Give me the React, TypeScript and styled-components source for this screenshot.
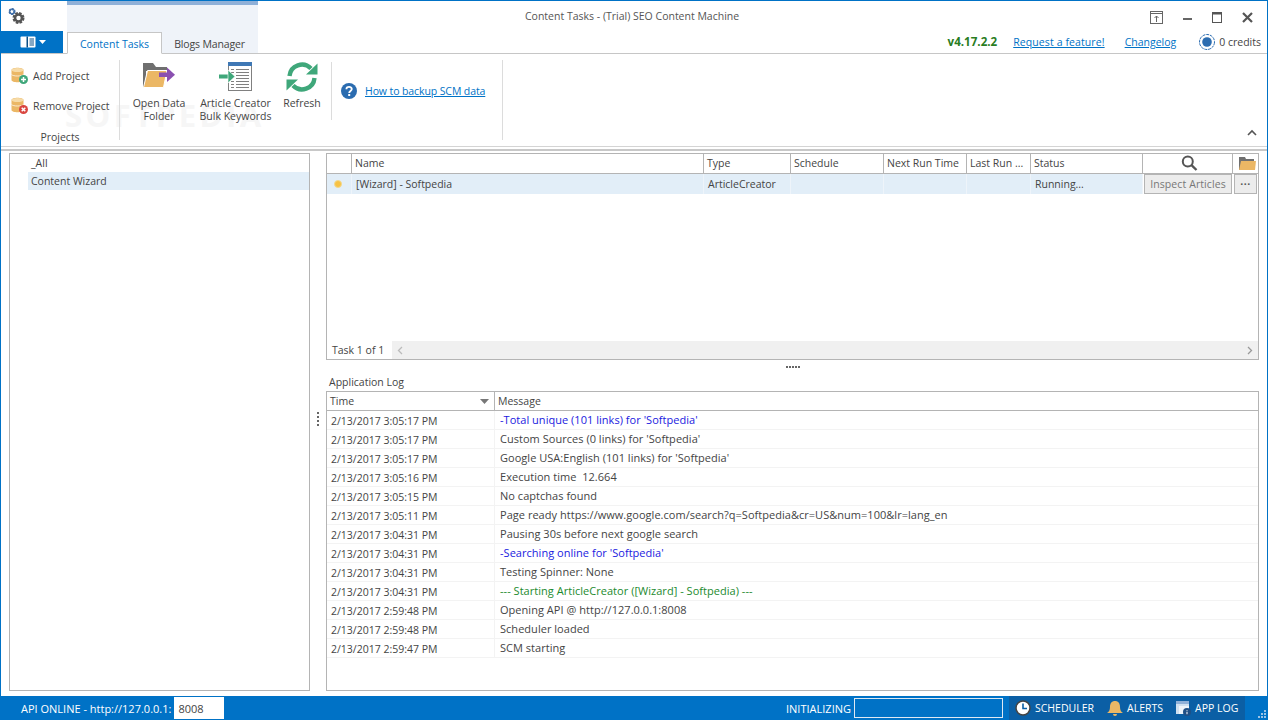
import * as React from 'react';
import styled, { createGlobalStyle } from 'styled-components';

const GlobalStyle = createGlobalStyle`
  html, body { margin: 0; padding: 0; height: 100%; background: #fff; overflow: hidden; }
  body { font-family: "Open Sans", "Noto Sans", "Liberation Sans", sans-serif; font-size: 10.5px; color: #444; }
  * { box-sizing: border-box; }
`;

const Window = styled.div`
  width: 1268px;
  height: 720px;
  display: flex;
  flex-direction: column;
  border: 1px solid #0072c6;
  border-bottom: none;
  background: #fff;
`;

const TopBar = styled.div`
  height: 53px;
  display: flex;
  border-bottom: 1px solid #c6c6c6;
`;

const LeftCol = styled.div`
  width: 66px;
  display: flex;
  flex-direction: column;
`;

const Quick = styled.div`
  height: 31px;
  padding: 6px 0 0 6px;
`;

const FileButton = styled.div`
  width: 62px;
  height: 22px;
  background: #0072c6;
  display: flex;
  align-items: center;
  justify-content: center;
  gap: 3px;
  padding-left: 2px;
`;

const Band = styled.div`
  width: 191px;
  background: #eff3f9;
  border-top: 4px solid #8fb0d8;
  display: flex;
  align-items: flex-end;
`;

const Tab = styled.div<{ $active?: boolean }>`
  height: 22px;
  margin-bottom: -1px;
  padding-top: 1px;
  display: flex;
  align-items: center;
  justify-content: center;
  font-size: 10.5px;
  width: ${p => (p.$active ? '95px' : '95px')};
  color: ${p => (p.$active ? '#0072c6' : '#444')};
  background: ${p => (p.$active ? '#fff' : 'transparent')};
  border: ${p => (p.$active ? '1px solid #c6c6c6' : 'none')};
  border-bottom: ${p => (p.$active ? '1px solid #fff' : 'none')};
  letter-spacing: ${p => (p.$active ? '0' : '-0.15px')};
  position: relative;
`;

const RightCol = styled.div`
  flex: 1;
  display: flex;
  flex-direction: column;
`;

const TitleRow = styled.div`
  height: 31px;
  display: flex;
  align-items: flex-start;
`;

const Title = styled.div`
  margin-left: 267px;
  padding-top: 8px;
  font-size: 10.5px;
  color: #555;
  flex: 1;
`;

const Controls = styled.div`
  display: flex;
  align-items: flex-start;
  gap: 20px;
  padding: 10px 14px 0 0;
`;

const InfoRow = styled.div`
  flex: 1;
  display: flex;
  align-items: center;
  justify-content: flex-end;
  padding: 0 6px 2px 0;
`;

const Version = styled.span`
  font-weight: 700;
  color: #2a7d1f;
  font-size: 11.6px;
  margin-right: 16px;
`;

const Link = styled.a`
  color: #0072c6;
  text-decoration: underline;
  font-size: 10.5px;
`;

const FeatureLink = styled(Link)`
  letter-spacing: 0.1px;
  margin-right: 20px;
`;

const HelpLink = styled(Link)`
  letter-spacing: -0.1px;
`;

const Credits = styled.span`
  display: flex;
  align-items: center;
  gap: 4px;
  margin-left: 23px;
  color: #444;
`;

const Ribbon = styled.div`
  height: 93px;
  display: flex;
  position: relative;
  border-bottom: 1px solid #d4d4d4;
`;

const Watermark = styled.div`
  position: absolute;
  left: 64px;
  top: 40px;
  font-size: 31px;
  font-weight: 700;
  letter-spacing: 3.5px;
  color: #f6f6f6;
  white-space: nowrap;
`;

const ProjectsGroup = styled.div`
  width: 119px;
  height: 80px;
  margin-top: 6px;
  padding-top: 1px;
  border-right: 1px solid #dcdcdc;
  display: flex;
  flex-direction: column;
  position: relative;
`;

const SmallButton = styled.div`
  flex: none;
  height: 30px;
  display: flex;
  align-items: center;
  gap: 4px;
  padding-left: 10px;
  font-size: 10.5px;
`;

const GroupLabel = styled.div`
  flex: none;
  margin-top: 8px;
  text-align: center;
  font-size: 10.5px;
  line-height: 16px;
`;

const LargeGroup = styled.div`
  width: 212px;
  display: flex;
  position: relative;
`;

const GroupEdge = styled.div`
  width: 1px;
  height: 58px;
  margin-top: 8px;
  background: #dcdcdc;
  flex: none;
`;

const LargeButton = styled.div<{ $w: number }>`
  width: ${p => p.$w}px;
  display: flex;
  flex-direction: column;
  align-items: center;
  text-align: center;
  line-height: 13px;
  font-size: 10.5px;
  padding-top: 8px;
`;

const IconSlot = styled.div`
  height: 35px;
  display: flex;
  align-items: flex-start;
  justify-content: center;
`;

const HelpGroup = styled.div`
  width: 171px;
  height: 80px;
  margin-top: 6px;
  border-right: 1px solid #dcdcdc;
  display: flex;
  align-items: center;
  gap: 8px;
  padding: 0 0 18px 9px;
`;

const Collapse = styled.div`
  position: absolute;
  right: 10px;
  bottom: 7px;
`;

const Divider = styled.div`
  height: 2px;
  background: #c8c8c8;
  margin-top: 2px;
`;

const Main = styled.div`
  flex: 1;
  display: flex;
  padding: 2px 8px 5px 8px;
`;

const TreePanel = styled.div`
  width: 301px;
  border: 1px solid #b4b4b4;
  padding: 0 0 0 18px;
`;

const TreeRow = styled.div<{ $selected?: boolean }>`
  height: 18px;
  line-height: 18px;
  padding-left: 3px;
  background: ${p => (p.$selected ? '#e2eef8' : 'transparent')};
`;

const Splitter = styled.div`
  width: 16px;
  display: flex;
  align-items: center;
  justify-content: center;
`;

const SplitDots = styled.div`
  display: flex;
  flex-direction: column;
  gap: 2px;
  transform: translateY(-3px);
  & > i { width: 2px; height: 2px; background: #666; display: block; }
`;

const RightPanel = styled.div`
  flex: 1;
  display: flex;
  flex-direction: column;
`;

const TaskGrid = styled.div`
  height: 207px;
  border: 1px solid #b4b4b4;
  display: flex;
  flex-direction: column;
`;

const taskCols = '25px 352px 87px 93px 83px 64px 112px 90px 1fr';

const TaskHeader = styled.div`
  height: 20px;
  display: grid;
  grid-template-columns: ${taskCols};
  border-bottom: 1px solid #b4b4b4;
`;

const HeadCell = styled.div<{ $center?: boolean }>`
  border-right: 1px solid #b4b4b4;
  padding: 0 0 1px 3px;
  display: flex;
  align-items: center;
  justify-content: ${p => (p.$center ? 'center' : 'flex-start')};
  white-space: nowrap;
  overflow: hidden;
  &:last-child { border-right: none; }
`;

const TaskRow = styled.div`
  height: 20px;
  display: grid;
  grid-template-columns: ${taskCols};
  background: #e2eef8;
`;

const TaskCell = styled.div`
  padding-left: 4px;
  display: flex;
  align-items: center;
  white-space: nowrap;
  border-right: 1px solid #eef4fa;
`;

const Dot = styled.div`
  width: 8px;
  height: 8px;
  border-radius: 50%;
  background: #f7c244;
  border: 1px solid #f3d98e;
  margin-left: 3px;
`;

const ActionCell = styled.div`
  background: #fff;
  padding: 0 1px;
  display: flex;
`;

const GreyButton = styled.div`
  flex: 1;
  height: 20px;
  background: #ececec;
  border: 1px solid #b4b4b4;
  color: #777;
  display: flex;
  align-items: center;
  justify-content: center;
  letter-spacing: 0.1px;
`;

const MoreButton = styled(GreyButton)`
  color: #555;
  font-weight: 700;
  letter-spacing: 0.5px;
`;

const TaskBody = styled.div`
  flex: 1;
`;

const TaskFooter = styled.div`
  height: 18px;
  display: flex;
  align-items: center;
`;

const FooterLabel = styled.div`
  width: 65px;
  padding-left: 5px;
  white-space: nowrap;
`;

const ScrollTrack = styled.div`
  flex: 1;
  height: 18px;
  background: #f0f0f0;
  display: flex;
  align-items: center;
  justify-content: space-between;
  padding: 0 5px;
`;

const HSplit = styled.div`
  height: 14px;
  display: flex;
  align-items: center;
  justify-content: center;
  gap: 1px;
  & > i { width: 2px; height: 2px; background: #666; display: block; }
`;

const LogLabel = styled.div`
  height: 17px;
  line-height: 17px;
  padding-left: 3px;
`;

const LogGrid = styled.div`
  flex: 1;
  border: 1px solid #b4b4b4;
  display: flex;
  flex-direction: column;
`;

const logCols = '168px 1fr';

const LogHeader = styled.div`
  height: 19px;
  display: grid;
  grid-template-columns: ${logCols};
  border-bottom: 1px solid #b4b4b4;
`;

const LogHead = styled.div`
  display: flex;
  align-items: center;
  justify-content: space-between;
  padding: 0 5px 0 3px;
  &:first-child { border-right: 1px solid #b4b4b4; }
`;

const LogRow = styled.div`
  height: 19px;
  display: grid;
  grid-template-columns: ${logCols};
  border-bottom: 1px solid #f3f3f3;
`;

const LogTime = styled.div`
  padding: 1px 0 0 4px;
  border-right: 1px solid #f3f3f3;
  display: flex;
  align-items: center;
  white-space: nowrap;
`;

const LogMessage = styled.div<{ $color?: string }>`
  padding: 0 0 1px 5px;
  display: flex;
  align-items: center;
  white-space: pre;
  font-size: 11px;
  letter-spacing: 0.03px;
  color: ${p => p.$color || '#444'};
`;

const StatusBar = styled.div`
  height: 24px;
  background: #0072c6;
  color: #fff;
  display: flex;
  align-items: center;
  margin: 0 -1px;
  padding-left: 21px;
  font-size: 11px;
`;

const PortInput = styled.div`
  width: 50px;
  height: 22px;
  background: #fff;
  color: #444;
  margin-left: 3px;
  padding-left: 4px;
  display: flex;
  align-items: center;
  font-size: 11px;
`;

const StatusText = styled.span`
  margin-left: auto;
  margin-right: 3px;
`;

const ProgressBox = styled.div`
  width: 149px;
  height: 20px;
  border: 1px solid #dfe9f3;
  margin-right: 6px;
`;

const StatusGroup = styled.div`
  height: 24px;
  width: 236px;
  background: #0b5fa5;
  display: flex;
  align-items: center;
  padding-left: 6px;
  font-size: 10.5px;
`;

const StatusItem = styled.div<{ $gap: number }>`
  display: flex;
  align-items: center;
  gap: 4px;
  margin-right: ${p => p.$gap}px;
`;

const Grip = styled.div`
  width: 23px;
  height: 24px;
  display: flex;
  align-items: flex-end;
  justify-content: flex-end;
  padding: 0 2px 2px 0;
`;

const Gears = () => (
  <svg width="20" height="20" viewBox="0 0 20 20">
    <circle cx="5" cy="4.5" r="2.4" fill="none" stroke="#3f6ea8" strokeWidth="2.2" strokeDasharray="1.6 0.9" />
    <circle cx="5" cy="4.5" r="2.4" fill="none" stroke="#3f6ea8" strokeWidth="1.2" />
    <circle cx="11.5" cy="11" r="4.2" fill="none" stroke="#555" strokeWidth="3.6" strokeDasharray="2.2 1.1" />
    <circle cx="11.5" cy="11" r="3.5" fill="none" stroke="#555" strokeWidth="2.4" />
  </svg>
);

const FileIcon = () => (
  <>
    <svg width="16" height="12" viewBox="0 0 16 12">
      <rect x="0.5" y="0.5" width="15" height="11" rx="1" fill="#fff" />
      <rect x="6.5" y="0.5" width="1.5" height="11" fill="#0b4f86" />
      <path d="M9.5 3h4.5M9.5 5h4.5M9.5 7h4.5M9.5 9h4.5" stroke="#0b4f86" strokeWidth="1" />
    </svg>
    <svg width="7" height="4" viewBox="0 0 7 4"><path d="M0 0h7L3.5 4z" fill="#fff" /></svg>
  </>
);

const Database = ({ kind }: { kind: 'add' | 'remove' }) => (
  <svg width="18" height="18" viewBox="0 0 18 18">
    <path d="M0.5 3c0-3 12-3 12 0v10c0 3-12 3-12 0z" fill="#ebb765" />
    <ellipse cx="6.5" cy="3" rx="6" ry="2" fill="#f6dba8" />
    <path d="M0.5 7.5c1.5 2 10.5 2 12 0" fill="none" stroke="#fff" strokeWidth="0.7" />
    <circle cx="12.5" cy="12.5" r="4.5" fill={kind === 'add' ? '#3fa77a' : '#d9453f'} />
    {kind === 'add' ? (
      <path d="M10 12.5h5M12.5 10v5" stroke="#fff" strokeWidth="1.5" />
    ) : (
      <path d="M10.7 10.7l3.6 3.6M14.3 10.7l-3.6 3.6" stroke="#fff" strokeWidth="1.5" />
    )}
  </svg>
);

const FolderArrow = () => (
  <svg width="33" height="26" viewBox="0 0 33 26">
    <path d="M0 1V25H3V9H24V5H13L10 1z" fill="#6f6f6f" />
    <path d="M0.5 25.5L4.5 8.5H24L20.5 25.5z" fill="#ebb765" stroke="#fff" />
    <rect x="16" y="10.5" width="9" height="4.5" fill="#8a4fb0" />
    <path d="M24 5.5L32 12.8L24 20z" fill="#8a4fb0" />
  </svg>
);

const ArticleIcon = () => (
  <svg width="33" height="29" viewBox="0 0 33 29">
    <rect x="9.5" y="0.5" width="23" height="28" fill="#fff" stroke="#808080" />
    <rect x="9" y="0" width="24" height="4" fill="#3f78b5" />
    <path d="M17 7.5h13M17 10.5h13M17 13.5h13M17 16.5h13M17 19.5h13M17 22.5h13M17 25.5h13" stroke="#808080" />
    <path d="M12 7.5h3M12 10.5h3M12 19.5h3M12 22.5h3M12 25.5h3" stroke="#808080" />
    <rect x="0" y="12.5" width="10" height="4" fill="#3fa77a" />
    <path d="M9 8L16 14.5L9 21z" fill="#3fa77a" stroke="#fff" strokeWidth="0.6" />
  </svg>
);

const RefreshIcon = () => (
  <svg width="32" height="30" viewBox="0 0 32 30">
    <path d="M3.5 14A12.5 12.5 0 0 1 25 6.5" fill="none" stroke="#3fa77a" strokeWidth="4.4" />
    <path d="M20 12.5H31.5V1.5z" fill="#3fa77a" />
    <path d="M28.5 16A12.5 12.5 0 0 1 7 23.5" fill="none" stroke="#3fa77a" strokeWidth="4.4" />
    <path d="M12 17.5H0.5V28.5z" fill="#3fa77a" />
  </svg>
);

const HelpIcon = () => (
  <svg width="16" height="16" viewBox="0 0 16 16">
    <circle cx="8" cy="8" r="8" fill="#2b6cb0" />
    <path d="M5.4 6.2C5.4 3.2 10.8 3.2 10.8 6.1C10.8 8 8.2 8 8.2 10" fill="none" stroke="#fff" strokeWidth="1.8" />
    <rect x="7.2" y="11" width="2" height="2" fill="#fff" />
  </svg>
);

const WinControls = () => (
  <Controls>
    <svg width="13" height="13" viewBox="0 0 13 13">
      <rect x="0.5" y="0.5" width="12" height="12" fill="none" stroke="#666" />
      <path d="M0 2.5h13" stroke="#666" />
      <path d="M6.5 11V5M4.5 7l2-2 2 2" fill="none" stroke="#666" />
    </svg>
    <svg width="9" height="13" viewBox="0 0 9 13"><rect x="0" y="7" width="9" height="2" fill="#666" /></svg>
    <svg width="10" height="11" viewBox="0 0 10 11" style={{ marginTop: 1 }}>
      <rect x="0.5" y="0.5" width="9" height="10" fill="none" stroke="#555" />
      <rect x="0" y="0" width="10" height="2.5" fill="#555" />
    </svg>
    <svg width="11" height="11" viewBox="0 0 11 11" style={{ marginTop: 1 }}>
      <path d="M1 1l9 9M10 1l-9 9" stroke="#555" strokeWidth="2.2" />
    </svg>
  </Controls>
);

const CreditIcon = () => (
  <svg width="16" height="16" viewBox="0 0 16 16">
    <circle cx="8" cy="8" r="7.5" fill="none" stroke="#2b6cb0" strokeDasharray="3 0.8" />
    <circle cx="8" cy="8" r="4.8" fill="#2b6cb0" />
  </svg>
);

const SearchIcon = () => (
  <svg width="17" height="16" viewBox="0 0 17 16">
    <circle cx="6.8" cy="6.5" r="5" fill="none" stroke="#555" strokeWidth="2" />
    <path d="M10.5 10.2l5 4.8" stroke="#555" strokeWidth="2.4" />
  </svg>
);

const FolderIcon = () => (
  <svg width="17" height="14" viewBox="0 0 17 14">
    <path d="M0 1V14H2V5H15V3H7L6 1z" fill="#6f6f6f" />
    <path d="M0 14L2 5H17L16 14z" fill="#ebb765" />
  </svg>
);

const ClockIcon = () => (
  <svg width="16" height="16" viewBox="0 0 16 16">
    <circle cx="8" cy="8" r="7" fill="#fff" stroke="#444" strokeWidth="1.5" />
    <path d="M8 3.5V8.5H12" fill="none" stroke="#0b5fa5" strokeWidth="1.6" />
  </svg>
);

const BellIcon = () => (
  <svg width="16" height="16" viewBox="0 0 16 16">
    <path d="M0 13C2 12 3 10 3 7C3 3 5 1 8 1C11 1 13 3 13 7C13 10 14 12 16 13z" fill="#ebb765" />
    <path d="M6 14h4a2 2 0 0 1-4 0z" fill="#ebb765" />
  </svg>
);

const AppLogIcon = () => (
  <svg width="15" height="15" viewBox="0 0 15 15">
    <rect x="0" y="0" width="13" height="13" fill="#cfe0f0" />
    <rect x="0" y="0" width="13" height="3" fill="#8fb0d8" />
    <rect x="3" y="5" width="10" height="8" fill="#eef4fa" />
    <circle cx="11" cy="11" r="4" fill="#1f4f85" />
    <path d="M11 9.3v.8M11 10.8v2.4" stroke="#fff" strokeWidth="1" />
  </svg>
);

const logRows: { time: string; msg: string; color?: string }[] = [
  { time: '2/13/2017 3:05:17 PM', msg: "-Total unique (101 links) for 'Softpedia'", color: '#1a1ae0' },
  { time: '2/13/2017 3:05:17 PM', msg: "Custom Sources (0 links) for 'Softpedia'" },
  { time: '2/13/2017 3:05:17 PM', msg: "Google USA:English (101 links) for 'Softpedia'" },
  { time: '2/13/2017 3:05:16 PM', msg: 'Execution time  12.664' },
  { time: '2/13/2017 3:05:15 PM', msg: 'No captchas found' },
  { time: '2/13/2017 3:05:11 PM', msg: 'Page ready https://www.google.com/search?q=Softpedia&cr=US&num=100&lr=lang_en' },
  { time: '2/13/2017 3:04:31 PM', msg: 'Pausing 30s before next google search' },
  { time: '2/13/2017 3:04:31 PM', msg: "-Searching online for 'Softpedia'", color: '#1a1ae0' },
  { time: '2/13/2017 3:04:31 PM', msg: 'Testing Spinner: None' },
  { time: '2/13/2017 3:04:31 PM', msg: '--- Starting ArticleCreator ([Wizard] - Softpedia) ---', color: '#1c8a2e' },
  { time: '2/13/2017 2:59:48 PM', msg: 'Opening API @ http://127.0.0.1:8008' },
  { time: '2/13/2017 2:59:48 PM', msg: 'Scheduler loaded' },
  { time: '2/13/2017 2:59:47 PM', msg: 'SCM starting' },
];

export default function App() {
  return (
    <>
      <GlobalStyle />
      <Window>
        <TopBar>
          <LeftCol>
            <Quick><Gears /></Quick>
            <FileButton><FileIcon /></FileButton>
          </LeftCol>
          <Band>
            <Tab $active>Content Tasks</Tab>
            <Tab>Blogs Manager</Tab>
          </Band>
          <RightCol>
            <TitleRow>
              <Title>Content Tasks - (Trial) SEO Content Machine</Title>
              <WinControls />
            </TitleRow>
            <InfoRow>
              <Version>v4.17.2.2</Version>
              <FeatureLink>Request a feature!</FeatureLink>
              <Link>Changelog</Link>
              <Credits><CreditIcon />0 credits</Credits>
            </InfoRow>
          </RightCol>
        </TopBar>
        <Ribbon>
          <Watermark aria-hidden="true">SOFTPEDIA</Watermark>
          <ProjectsGroup>
            <SmallButton><Database kind="add" />Add Project</SmallButton>
            <SmallButton><Database kind="remove" />Remove Project</SmallButton>
            <GroupLabel>Projects</GroupLabel>
          </ProjectsGroup>
          <LargeGroup>
            <LargeButton $w={78}>
              <IconSlot><FolderArrow /></IconSlot>
              Open Data<br />Folder
            </LargeButton>
            <LargeButton $w={75}>
              <IconSlot><ArticleIcon /></IconSlot>
              Article Creator<br />Bulk Keywords
            </LargeButton>
            <LargeButton $w={58}>
              <IconSlot><RefreshIcon /></IconSlot>
              Refresh
            </LargeButton>
            <GroupEdge />
          </LargeGroup>
          <HelpGroup>
            <HelpIcon />
            <HelpLink>How to backup SCM data</HelpLink>
          </HelpGroup>
          <Collapse>
            <svg width="10" height="7" viewBox="0 0 10 7"><path d="M1 6l4-4 4 4" fill="none" stroke="#555" strokeWidth="1.6" /></svg>
          </Collapse>
        </Ribbon>
        <Divider />
        <Main>
          <TreePanel>
            <TreeRow>_All</TreeRow>
            <TreeRow $selected>Content Wizard</TreeRow>
          </TreePanel>
          <Splitter>
            <SplitDots><i /><i /><i /><i /></SplitDots>
          </Splitter>
          <RightPanel>
            <TaskGrid>
              <TaskHeader>
                <HeadCell />
                <HeadCell>Name</HeadCell>
                <HeadCell>Type</HeadCell>
                <HeadCell>Schedule</HeadCell>
                <HeadCell>Next Run Time</HeadCell>
                <HeadCell>Last Run ...</HeadCell>
                <HeadCell>Status</HeadCell>
                <HeadCell $center><SearchIcon /></HeadCell>
                <HeadCell $center><FolderIcon /></HeadCell>
              </TaskHeader>
              <TaskRow>
                <TaskCell><Dot /></TaskCell>
                <TaskCell>[Wizard] - Softpedia</TaskCell>
                <TaskCell>ArticleCreator</TaskCell>
                <TaskCell />
                <TaskCell />
                <TaskCell />
                <TaskCell>Running...</TaskCell>
                <ActionCell><GreyButton>Inspect Articles</GreyButton></ActionCell>
                <ActionCell><MoreButton>···</MoreButton></ActionCell>
              </TaskRow>
              <TaskBody />
              <TaskFooter>
                <FooterLabel>Task 1 of 1</FooterLabel>
                <ScrollTrack>
                  <svg width="6" height="9" viewBox="0 0 6 9"><path d="M5 1L1.5 4.5L5 8" fill="none" stroke="#bbb" strokeWidth="1.3" /></svg>
                  <svg width="6" height="9" viewBox="0 0 6 9"><path d="M1 1L4.5 4.5L1 8" fill="none" stroke="#999" strokeWidth="1.3" /></svg>
                </ScrollTrack>
              </TaskFooter>
            </TaskGrid>
            <HSplit><i /><i /><i /><i /><i /></HSplit>
            <LogLabel>Application Log</LogLabel>
            <LogGrid>
              <LogHeader>
                <LogHead>
                  Time
                  <svg width="9" height="5" viewBox="0 0 9 5"><path d="M0 0h9L4.5 5z" fill="#777" /></svg>
                </LogHead>
                <LogHead>Message</LogHead>
              </LogHeader>
              {logRows.map((row, i) => (
                <LogRow key={i}>
                  <LogTime>{row.time}</LogTime>
                  <LogMessage $color={row.color}>{row.msg}</LogMessage>
                </LogRow>
              ))}
            </LogGrid>
          </RightPanel>
        </Main>
        <StatusBar>
          API ONLINE - http://127.0.0.1:
          <PortInput>8008</PortInput>
          <StatusText>INITIALIZING</StatusText>
          <ProgressBox />
          <StatusGroup>
            <StatusItem $gap={13}><ClockIcon />SCHEDULER</StatusItem>
            <StatusItem $gap={13}><BellIcon />ALERTS</StatusItem>
            <StatusItem $gap={0}><AppLogIcon />APP LOG</StatusItem>
          </StatusGroup>
          <Grip>
            <svg width="8" height="8" viewBox="0 0 8 8"><path d="M6 0h2v2H6zM3 3h2v2H3zM6 3h2v2H6zM0 6h2v2H0zM3 6h2v2H3zM6 6h2v2H6z" fill="#9cc3e6" /></svg>
          </Grip>
        </StatusBar>
      </Window>
    </>
  );
}
